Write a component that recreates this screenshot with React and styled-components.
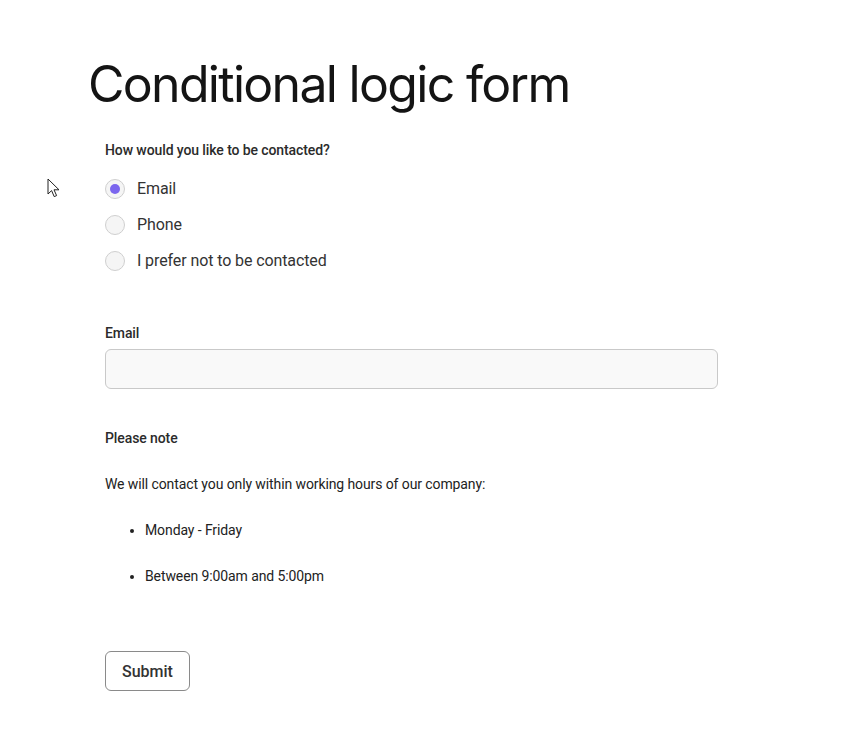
import React, { useState } from "react"
import styled, { createGlobalStyle } from "styled-components"

const GlobalStyle = createGlobalStyle`
  body {
    margin: 0;
    background: #fff;
    font-family: Roboto, "Liberation Sans", sans-serif;
    color: #2b2b2b;
  }
`

const options = ["Email", "Phone", "I prefer not to be contacted"]

export default function App() {
  const [choice, setChoice] = useState("Email")
  return (
    <Page>
      <GlobalStyle />
      <Cursor width="14" height="20" viewBox="0 0 14 20">
        <path
          d="M1 1 L1 16 L4.6 12.6 L7.2 18.6 L9.6 17.6 L7 11.8 L12 11.8 Z"
          fill="#fff"
          stroke="#222"
          strokeWidth="1"
          strokeLinejoin="round"
        />
      </Cursor>
      <Title>Conditional logic form</Title>
      <Form onSubmit={(e) => e.preventDefault()}>
        {/* contact method */}
        <Label>How would you like to be contacted?</Label>
        <Options>
          {options.map((o) => (
            <Option key={o}>
              <Radio
                type="radio"
                name="contact"
                checked={choice === o}
                onChange={() => setChoice(o)}
              />
              {o}
            </Option>
          ))}
        </Options>
        {/* email */}
        <Field>
          <Label htmlFor="email">Email</Label>
          <Input id="email" type="email" />
        </Field>
        {/* note */}
        <Label as="div">Please note</Label>
        <Text>We will contact you only within working hours of our company:</Text>
        <List>
          <li>Monday - Friday</li>
          <li>Between 9:00am and 5:00pm</li>
        </List>
        <Submit type="submit">Submit</Submit>
      </Form>
    </Page>
  )
}

const Page = styled.main`
  position: relative;
  padding: 52px 0 40px 88px;
`

const Cursor = styled.svg`
  position: absolute;
  left: 47px;
  top: 178px;
`

const Title = styled.h1`
  margin: 0;
  font-family: Inter, "Noto Sans", sans-serif;
  font-weight: 400;
  font-size: 50px;
  line-height: 64px;
  letter-spacing: -1.7px;
  color: #141414;
`

const Form = styled.form`
  padding: 24px 0 0 17px;
  width: 613px;
  display: flex;
  flex-direction: column;
  align-items: flex-start;
`

const Label = styled.label`
  display: block;
  font-size: 14px;
  font-weight: 500;
  line-height: 20px;
  letter-spacing: -0.1px;
  color: #2b2b2b;
`

const Options = styled.div`
  margin-top: 19px;
  display: flex;
  flex-direction: column;
  gap: 16px;
`

const Option = styled.label`
  display: flex;
  align-items: center;
  gap: 12px;
  font-size: 16px;
  line-height: 20px;
  letter-spacing: -0.1px;
  color: #333;
  cursor: pointer;
`

const Radio = styled.input`
  appearance: none;
  margin: 0;
  width: 20px;
  height: 20px;
  border-radius: 50%;
  border: 1px solid #cfcfcf;
  background: #f5f5f5;
  display: grid;
  place-items: center;
  &:checked::after {
    content: "";
    width: 10px;
    height: 10px;
    border-radius: 50%;
    background: #7b66ee;
  }
`

const Field = styled.div`
  margin-top: 52px;
  width: 100%;
  display: flex;
  flex-direction: column;
  gap: 6px;
  margin-bottom: 39px;
`

const Input = styled.input`
  box-sizing: border-box;
  width: 100%;
  height: 40px;
  border: 1px solid #c9c9c9;
  border-radius: 6px;
  background: #f9f9f9;
  font: inherit;
  padding: 0 12px;
`

const Text = styled.p`
  margin: 26px 0 0;
  font-size: 14px;
  line-height: 20px;
  letter-spacing: -0.1px;
  color: #222;
`

const List = styled.ul`
  margin: 26px 0 0;
  padding-left: 40px;
  font-size: 14px;
  line-height: 20px;
  letter-spacing: -0.1px;
  color: #222;
  li + li {
    margin-top: 26px;
  }
`

const Submit = styled.button`
  margin-top: 65px;
  height: 40px;
  padding: 0 16px;
  border: 1px solid #8a8a8a;
  border-radius: 6px;
  background: #fff;
  font-family: Roboto, "Liberation Sans", sans-serif;
  font-size: 16px;
  font-weight: 500;
  color: #333;
`
